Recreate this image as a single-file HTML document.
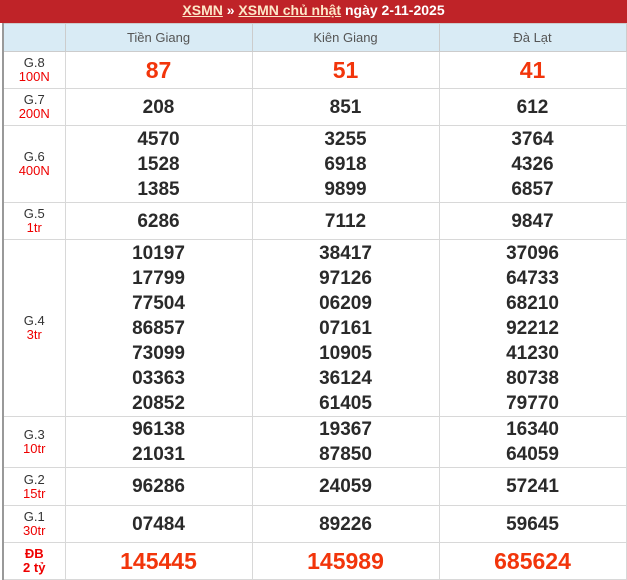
<!DOCTYPE html><html><head><meta charset="utf-8"><style>
body{margin:0;background:#fff;font-family:"Liberation Sans",Arial,sans-serif;width:627px;height:573px;overflow:hidden}
.hd{height:23px;background:#bf2328;color:#fff;text-align:center;font-weight:bold;font-size:14px;line-height:21px}
.hd u{color:#fde7c8}
table{border-collapse:collapse;position:absolute;left:2px;top:23px;width:624px;table-layout:fixed;border-left:2px solid #999}
td{border:1px solid #d8d8d8;text-align:center;padding:0}
th{background:#d9ebf5;border:1px solid #ccc;font-weight:normal;color:#555;font-size:13px;height:27px;padding:0}
td.l{font-size:13px;color:#333;line-height:14px}
td.l span{color:#e00}
td.n{font-weight:bold;font-size:19px;color:#2a2a2a;line-height:25px}
td.r{font-weight:bold;font-size:23px;color:#f2350b}
</style></head><body>
<div class="hd"><u>XSMN</u> » <u>XSMN chủ nhật</u> ngày 2-11-2025</div>
<table>
<colgroup><col style="width:62px"><col style="width:187px"><col style="width:187px"><col style="width:187px"></colgroup>
<tr><th></th><th>Tiền Giang</th><th>Kiên Giang</th><th>Đà Lạt</th></tr>
<tr style="height:37px"><td class="l">G.8<br><span>100N</span></td><td class="r">87</td><td class="r">51</td><td class="r">41</td></tr>
<tr style="height:37px"><td class="l">G.7<br><span>200N</span></td><td class="n">208</td><td class="n">851</td><td class="n">612</td></tr>
<tr style="height:77px"><td class="l">G.6<br><span>400N</span></td><td class="n">4570<br>1528<br>1385</td><td class="n">3255<br>6918<br>9899</td><td class="n">3764<br>4326<br>6857</td></tr>
<tr style="height:37px"><td class="l">G.5<br><span>1tr</span></td><td class="n">6286</td><td class="n">7112</td><td class="n">9847</td></tr>
<tr style="height:177px"><td class="l">G.4<br><span>3tr</span></td><td class="n">10197<br>17799<br>77504<br>86857<br>73099<br>03363<br>20852</td><td class="n">38417<br>97126<br>06209<br>07161<br>10905<br>36124<br>61405</td><td class="n">37096<br>64733<br>68210<br>92212<br>41230<br>80738<br>79770</td></tr>
<tr style="height:51px"><td class="l">G.3<br><span>10tr</span></td><td class="n">96138<br>21031</td><td class="n">19367<br>87850</td><td class="n">16340<br>64059</td></tr>
<tr style="height:38px"><td class="l">G.2<br><span>15tr</span></td><td class="n">96286</td><td class="n">24059</td><td class="n">57241</td></tr>
<tr style="height:37px"><td class="l">G.1<br><span>30tr</span></td><td class="n">07484</td><td class="n">89226</td><td class="n">59645</td></tr>
<tr style="height:37px"><td class="l" style="color:#e00;font-weight:bold">ĐB<br><span style="font-weight:bold">2 tỷ</span></td><td class="r">145445</td><td class="r">145989</td><td class="r">685624</td></tr>
</table>
</body></html>
